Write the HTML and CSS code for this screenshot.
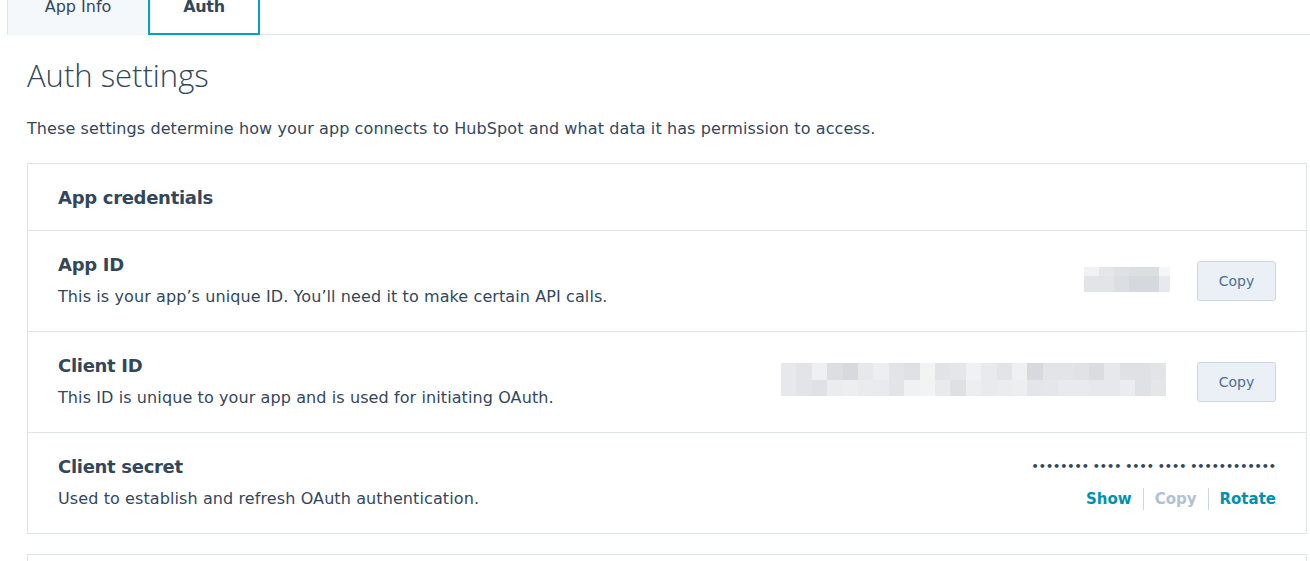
FILE: index.html
```html
<!DOCTYPE html>
<html>
<head>
<meta charset="utf-8">
<link rel="stylesheet" href="styles.css">
</head>
<body>
<nav class="tabs">
  <div class="tab">App Info</div>
  <div class="tab tab-active">Auth</div>
</nav>
<main class="content">
  <h1 class="page-title">Auth settings</h1>
  <p class="page-desc">These settings determine how your app connects to HubSpot and what data it has permission to access.</p>

  <section class="card">
    <div class="card-header">App credentials</div>

    <div class="row">
      <div class="row-text">
        <div class="row-title">App ID</div>
        <div class="row-desc">This is your app’s unique ID. You’ll need it to make certain API calls.</div>
      </div>
      <div class="row-actions">
        <svg class="blur blur-app" viewBox="0 0 86 25" preserveAspectRatio="none" shape-rendering="crispEdges">
          <rect x="0" y="0" width="15" height="9" fill="#f0f1f3"/><rect x="15" y="0" width="15" height="9" fill="#e4e6e8"/><rect x="30" y="0" width="15" height="9" fill="#dfe1e4"/><rect x="45" y="0" width="15" height="9" fill="#dcdfe2"/><rect x="60" y="0" width="15" height="9" fill="#dcdfe2"/><rect x="75" y="0" width="11" height="9" fill="#f4f6f8"/>
          <rect x="0" y="9" width="15" height="16" fill="#e2e4e7"/><rect x="15" y="9" width="15" height="16" fill="#e2e4e7"/><rect x="30" y="9" width="15" height="16" fill="#dcdfe2"/><rect x="45" y="9" width="15" height="16" fill="#d5d8dc"/><rect x="60" y="9" width="15" height="16" fill="#d5d8dc"/><rect x="75" y="9" width="11" height="16" fill="#e6e9ee"/>
        </svg>
        <button class="btn">Copy</button>
      </div>
    </div>

    <div class="row">
      <div class="row-text">
        <div class="row-title">Client ID</div>
        <div class="row-desc">This ID is unique to your app and is used for initiating OAuth.</div>
      </div>
      <div class="row-actions">
        <svg class="blur blur-client" viewBox="0 0 25 2" preserveAspectRatio="none" shape-rendering="crispEdges">
          <rect x="0" y="0" width="1" height="1" fill="#e8e8ea"/><rect x="1" y="0" width="1" height="1" fill="#e2e4e7"/><rect x="2" y="0" width="1" height="1" fill="#eef0f2"/><rect x="3" y="0" width="1" height="1" fill="#dcdee1"/><rect x="4" y="0" width="1" height="1" fill="#d6d9dd"/><rect x="5" y="0" width="1" height="1" fill="#e6e8ea"/><rect x="6" y="0" width="1" height="1" fill="#eceef0"/><rect x="7" y="0" width="1" height="1" fill="#e2e4e7"/><rect x="8" y="0" width="1" height="1" fill="#dfe1e4"/><rect x="9" y="0" width="1" height="1" fill="#f2f3f4"/><rect x="10" y="0" width="1" height="1" fill="#e1e3e6"/><rect x="11" y="0" width="1" height="1" fill="#e4e6e8"/><rect x="12" y="0" width="1" height="1" fill="#f0f1f3"/><rect x="13" y="0" width="1" height="1" fill="#e8eaec"/><rect x="14" y="0" width="1" height="1" fill="#e2e4e7"/><rect x="15" y="0" width="1" height="1" fill="#eef0f1"/><rect x="16" y="0" width="1" height="1" fill="#d6d9de"/><rect x="17" y="0" width="1" height="1" fill="#e2e4e7"/><rect x="18" y="0" width="1" height="1" fill="#e2e4e7"/><rect x="19" y="0" width="1" height="1" fill="#e0e2e5"/><rect x="20" y="0" width="1" height="1" fill="#dadcdf"/><rect x="21" y="0" width="1" height="1" fill="#e6e8eb"/><rect x="22" y="0" width="1" height="1" fill="#dfe1e4"/><rect x="23" y="0" width="1" height="1" fill="#dfe1e4"/><rect x="24" y="0" width="1" height="1" fill="#e2e4e7"/>
          <rect x="0" y="1" width="1" height="1" fill="#e8e8ea"/><rect x="1" y="1" width="1" height="1" fill="#e2e5e8"/><rect x="2" y="1" width="1" height="1" fill="#dfe1e4"/><rect x="3" y="1" width="1" height="1" fill="#eaecee"/><rect x="4" y="1" width="1" height="1" fill="#eceef0"/><rect x="5" y="1" width="1" height="1" fill="#e9ebed"/><rect x="6" y="1" width="1" height="1" fill="#e8eaed"/><rect x="7" y="1" width="1" height="1" fill="#e2e4e7"/><rect x="8" y="1" width="1" height="1" fill="#f0f1f2"/><rect x="9" y="1" width="1" height="1" fill="#f3f3f4"/><rect x="10" y="1" width="1" height="1" fill="#e8eaec"/><rect x="11" y="1" width="1" height="1" fill="#dde1e4"/><rect x="12" y="1" width="1" height="1" fill="#eceef0"/><rect x="13" y="1" width="1" height="1" fill="#e8eaed"/><rect x="14" y="1" width="1" height="1" fill="#eaecee"/><rect x="15" y="1" width="1" height="1" fill="#eceef0"/><rect x="16" y="1" width="1" height="1" fill="#e2e5e9"/><rect x="17" y="1" width="1" height="1" fill="#e4e6e9"/><rect x="18" y="1" width="1" height="1" fill="#e8eaed"/><rect x="19" y="1" width="1" height="1" fill="#e8eaec"/><rect x="20" y="1" width="1" height="1" fill="#e6e8eb"/><rect x="21" y="1" width="1" height="1" fill="#e6e8eb"/><rect x="22" y="1" width="1" height="1" fill="#eaecef"/><rect x="23" y="1" width="1" height="1" fill="#dfe2e5"/><rect x="24" y="1" width="1" height="1" fill="#e4e6e9"/>
        </svg>
        <button class="btn">Copy</button>
      </div>
    </div>

    <div class="row row-secret">
      <div class="row-text">
        <div class="row-title">Client secret</div>
        <div class="row-desc">Used to establish and refresh OAuth authentication.</div>
      </div>
      <div class="secret">
        <div class="secret-dots">•••••••• •••• •••• •••• ••••••••••••</div>
        <div class="secret-links">
          <span class="link">Show</span>
          <span class="link link-disabled">Copy</span>
          <span class="link">Rotate</span>
        </div>
      </div>
    </div>
  </section>

  <section class="card card-next"></section>
</main>
</body>
</html>
```
FILE: styles.css
```css
* { box-sizing: border-box; }

html, body {
  margin: 0;
  padding: 0;
  background: #ffffff;
  overflow: hidden;
}

body {
  font-family: "DejaVu Sans", "Liberation Sans", sans-serif;
  font-size: 16px;
  color: #33475b;
}

/* Tabs */
.tabs {
  display: flex;
  margin: -20px 0 0 7px;
  height: 55px;
  border-bottom: 1px solid #dfe3eb;
}

.tab {
  display: flex;
  align-items: center;
  justify-content: center;
  width: 141px;
  height: 55px;
  padding-bottom: 2px;
  background: #f5f8fa;
  border-left: 1px solid #dfe3eb;
  color: #33475b;
  font-size: 16px;
}

.tab-active {
  width: 112px;
  background: #ffffff;
  border: 2px solid #00a4bd;
  font-weight: bold;
  letter-spacing: -0.3px;
}

/* Content */
.content {
  padding: 0 3px 0 27px;
}

.page-title {
  margin: 20px 0 0;
  font-family: "Open Sans", "DejaVu Sans", sans-serif;
  font-weight: 300;
  font-size: 31px;
  line-height: 40px;
  color: #33475b;
}

.page-desc {
  margin: 22px 0 0;
  line-height: 24px;
  letter-spacing: 0.1px;
}

.card {
  margin-top: 22px;
  border: 1px solid #dfe3eb;
  background: #ffffff;
}

.card-header {
  padding: 22px 30px 20px;
  font-weight: bold;
  font-size: 18px;
  line-height: 24px;
  letter-spacing: -0.3px;
}

.row {
  display: flex;
  align-items: center;
  justify-content: space-between;
  padding: 22px 30px;
  border-top: 1px solid #dfe3eb;
}

.row-title {
  font-weight: bold;
  font-size: 18px;
  line-height: 24px;
  letter-spacing: -0.3px;
}

.row-desc {
  margin-top: 8px;
  line-height: 24px;
  letter-spacing: 0.1px;
}

.row-actions {
  display: flex;
  align-items: center;
}

.blur {
  display: block;
}

.blur-app {
  width: 86px;
  height: 25px;
  margin-right: 27px;
  margin-top: -4px;
}

.blur-client {
  width: 385px;
  height: 33px;
  margin-right: 31px;
  margin-top: -5px;
}

.btn {
  height: 40px;
  width: 79px;
  padding: 0;
  border: 1px solid #cbd6e2;
  border-radius: 3px;
  background: #eaf0f6;
  color: #506e91;
  font-family: "DejaVu Sans", sans-serif;
  font-size: 14px;
}

/* Client secret */
.row-secret {
  align-items: flex-start;
}

.secret {
  display: flex;
  flex-direction: column;
  align-items: flex-end;
}

.secret-dots {
  font-size: 11.2px;
  font-weight: bold;
  line-height: 24px;
  color: #33475b;
}

.secret-links {
  display: flex;
  align-items: center;
  margin-top: 8px;
  height: 24px;
}

.link {
  font-weight: bold;
  font-size: 15px;
  line-height: 22px;
  color: #0091ae;
  padding: 0 11px;
  border-left: 1px solid #cbd6e2;
}

.link:first-child {
  border-left: none;
}

.link:last-child {
  padding-right: 0;
}

.link-disabled {
  color: #b0c1d4;
}

.card-next {
  margin-top: 20px;
  height: 7px;
  border-bottom: none;
}
```
